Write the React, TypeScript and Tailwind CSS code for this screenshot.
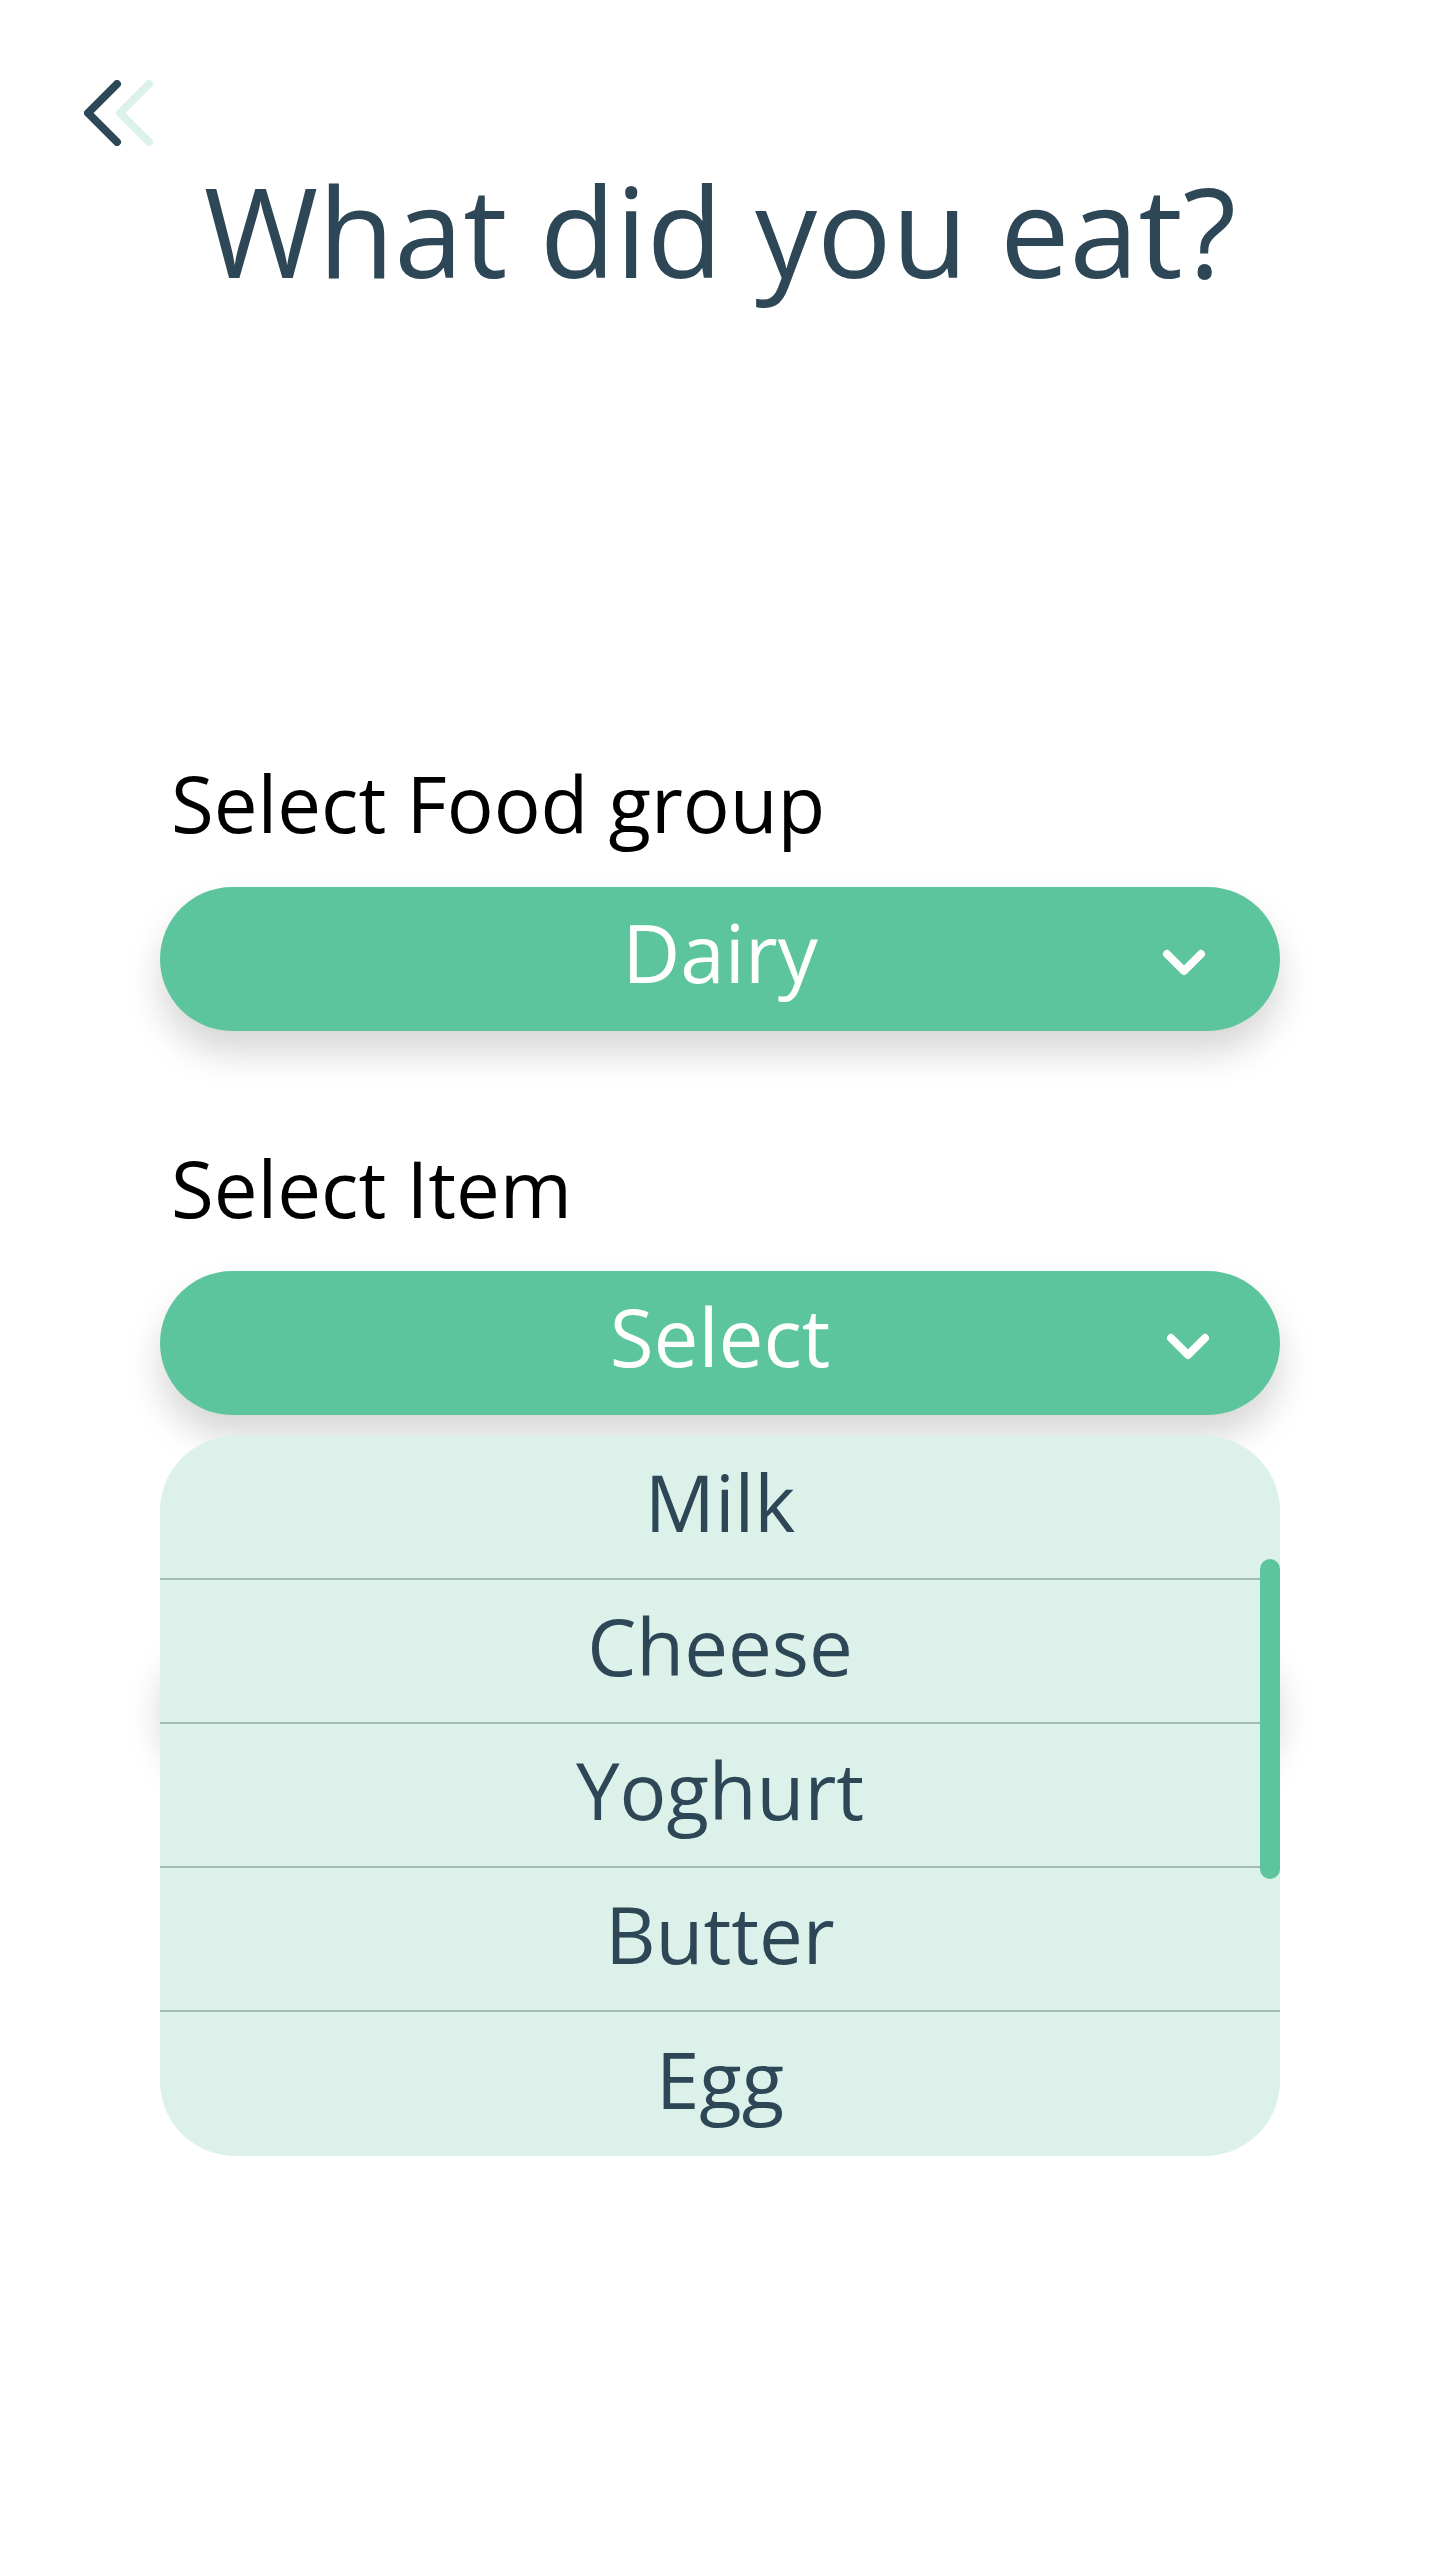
const items = ['Milk', 'Cheese', 'Yoghurt', 'Butter', 'Egg'];

function BackIcon() {
  return (
    <svg width="72" height="66" viewBox="0 0 72 66" fill="none" strokeWidth="8" strokeLinecap="round" strokeLinejoin="round">
      <path d="M65 4 L36 33 L65 62" stroke="#dcf1ea" />
      <path d="M33 4 L4 33 L33 62" stroke="#2e4757" />
    </svg>
  );
}

function Chevron() {
  return (
    <svg width="44" height="28" viewBox="0 0 44 28" fill="none" stroke="white" strokeWidth="8" strokeLinecap="round" strokeLinejoin="round">
      <path d="M5 5 L22 22 L39 5" />
    </svg>
  );
}

function Dropdown({ value, chevronRight }: { value: string; chevronRight: string }) {
  return (
    <div className="relative flex h-[144px] w-full items-center justify-center rounded-full bg-[#5dc59d] pb-[14px] shadow-[0_22px_36px_rgba(0,0,0,0.16)]">
      <span className="text-[80px] leading-none text-white">{value}</span>
      <div className={`absolute top-[62px] ${chevronRight}`}>
        <Chevron />
      </div>
    </div>
  );
}

export default function App() {
  return (
    <div className="min-h-[2560px] w-[1440px] bg-white text-[#2e4757]" style={{ fontFamily: '"Open Sans", "DejaVu Sans", sans-serif' }}>
      <div className="px-[84px] pt-[80px]">
        <BackIcon />
      </div>

      <h1 className="mt-[14px] text-center text-[124px] font-normal leading-[140px] text-[#2e4757]">What did you eat?</h1>

      <div className="mx-[160px] mt-[453px] flex flex-col">
        <label className="pl-[11px] text-[78px] leading-[100px] text-black">Select Food group</label>
        <div className="mt-[34px]">
          <Dropdown value="Dairy" chevronRight="right-[74px]" />
        </div>

        <label className="mt-[107px] pl-[11px] text-[78px] leading-[100px] text-black">Select Item</label>
        <div className="relative mt-[33px]">
          <Dropdown value="Select" chevronRight="right-[70px]" />

          {/* next control, hidden behind the open list */}
          <div className="absolute left-0 right-0 top-[350px] h-[144px] rounded-full shadow-[0_22px_36px_rgba(0,0,0,0.16)]" />

          <div className="absolute left-0 right-0 top-[165px] overflow-hidden rounded-[75px] bg-[#dbf1e9]">
            {items.map((item, i) => (
              <div
                key={item}
                className={`flex h-[144px] items-center justify-center pb-[10px] text-[78px] leading-none text-[#2e4757] ${i < items.length - 1 ? 'border-b-2 border-[#a3bcb4]' : ''}`}
              >
                {item}
              </div>
            ))}
            <div className="absolute right-0 top-[123px] h-[320px] w-[20px] rounded-full bg-[#5dc59d]" />
          </div>
        </div>
      </div>
    </div>
  );
}
